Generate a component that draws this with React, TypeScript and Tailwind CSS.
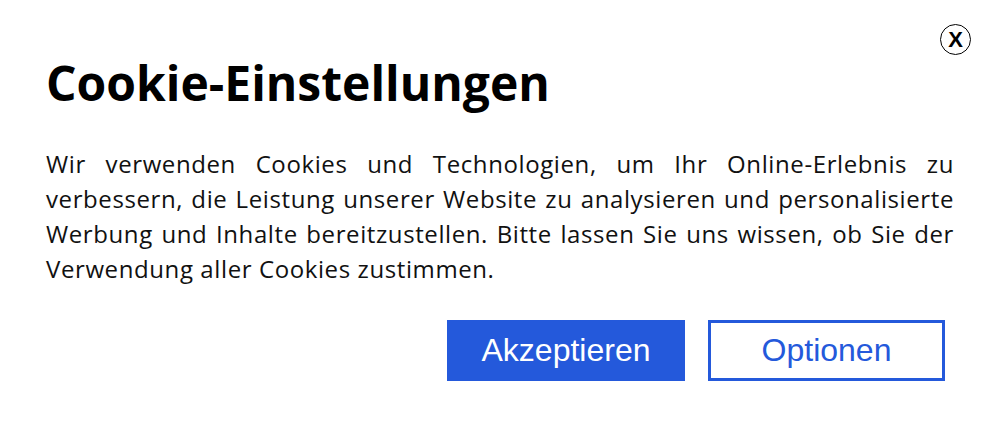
import React from 'react';

const CookieBanner = () => {
  // lines are kept as in the design; every line but the last is justified edge to edge
  const lines = [
    'Wir verwenden Cookies und Technologien, um Ihr Online-Erlebnis zu',
    'verbessern, die Leistung unserer Website zu analysieren und personalisierte',
    'Werbung und Inhalte bereitzustellen. Bitte lassen Sie uns wissen, ob Sie der',
  ];

  return (
    <div className="min-h-screen bg-white text-black">
      <div className="relative px-[46px] pt-[54px] pb-8">
        {/* Close */}
        <button
          className="absolute top-[24px] right-[29px] w-[31px] h-[31px] rounded-full border border-black flex items-center justify-center text-[22px] font-bold leading-none text-black"
          style={{ fontFamily: '"Liberation Sans", Arial, sans-serif' }}
          aria-label="Schließen"
        >
          X
        </button>

        <h1
          className="text-[48px] font-bold leading-[1.2] mb-[34px]"
          style={{ fontFamily: '"Open Sans", sans-serif' }}
        >
          Cookie-Einstellungen
        </h1>

        <p
          className="text-[24px] leading-[35px] tracking-[0.6px] text-justify text-[#111]"
          style={{ fontFamily: '"Open Sans", sans-serif' }}
        >
          {lines.map((line) => (
            <span key={line} className="block whitespace-nowrap [text-align-last:justify]">
              {line}
            </span>
          ))}
          <span className="block">Verwendung aller Cookies zustimmen.</span>
        </p>

        {/* Actions */}
        <div
          className="flex justify-end gap-[23px] mt-[34px] pr-[9px]"
          style={{ fontFamily: '"Liberation Sans", Arial, sans-serif' }}
        >
          <button className="w-[238px] h-[61px] bg-[#2459db] text-white text-[32px]">Akzeptieren</button>
          <button className="w-[237px] h-[61px] border-[3px] border-[#2459db] text-[#2459db] text-[32px] bg-white">
            Optionen
          </button>
        </div>
      </div>
    </div>
  );
};

export default CookieBanner;
